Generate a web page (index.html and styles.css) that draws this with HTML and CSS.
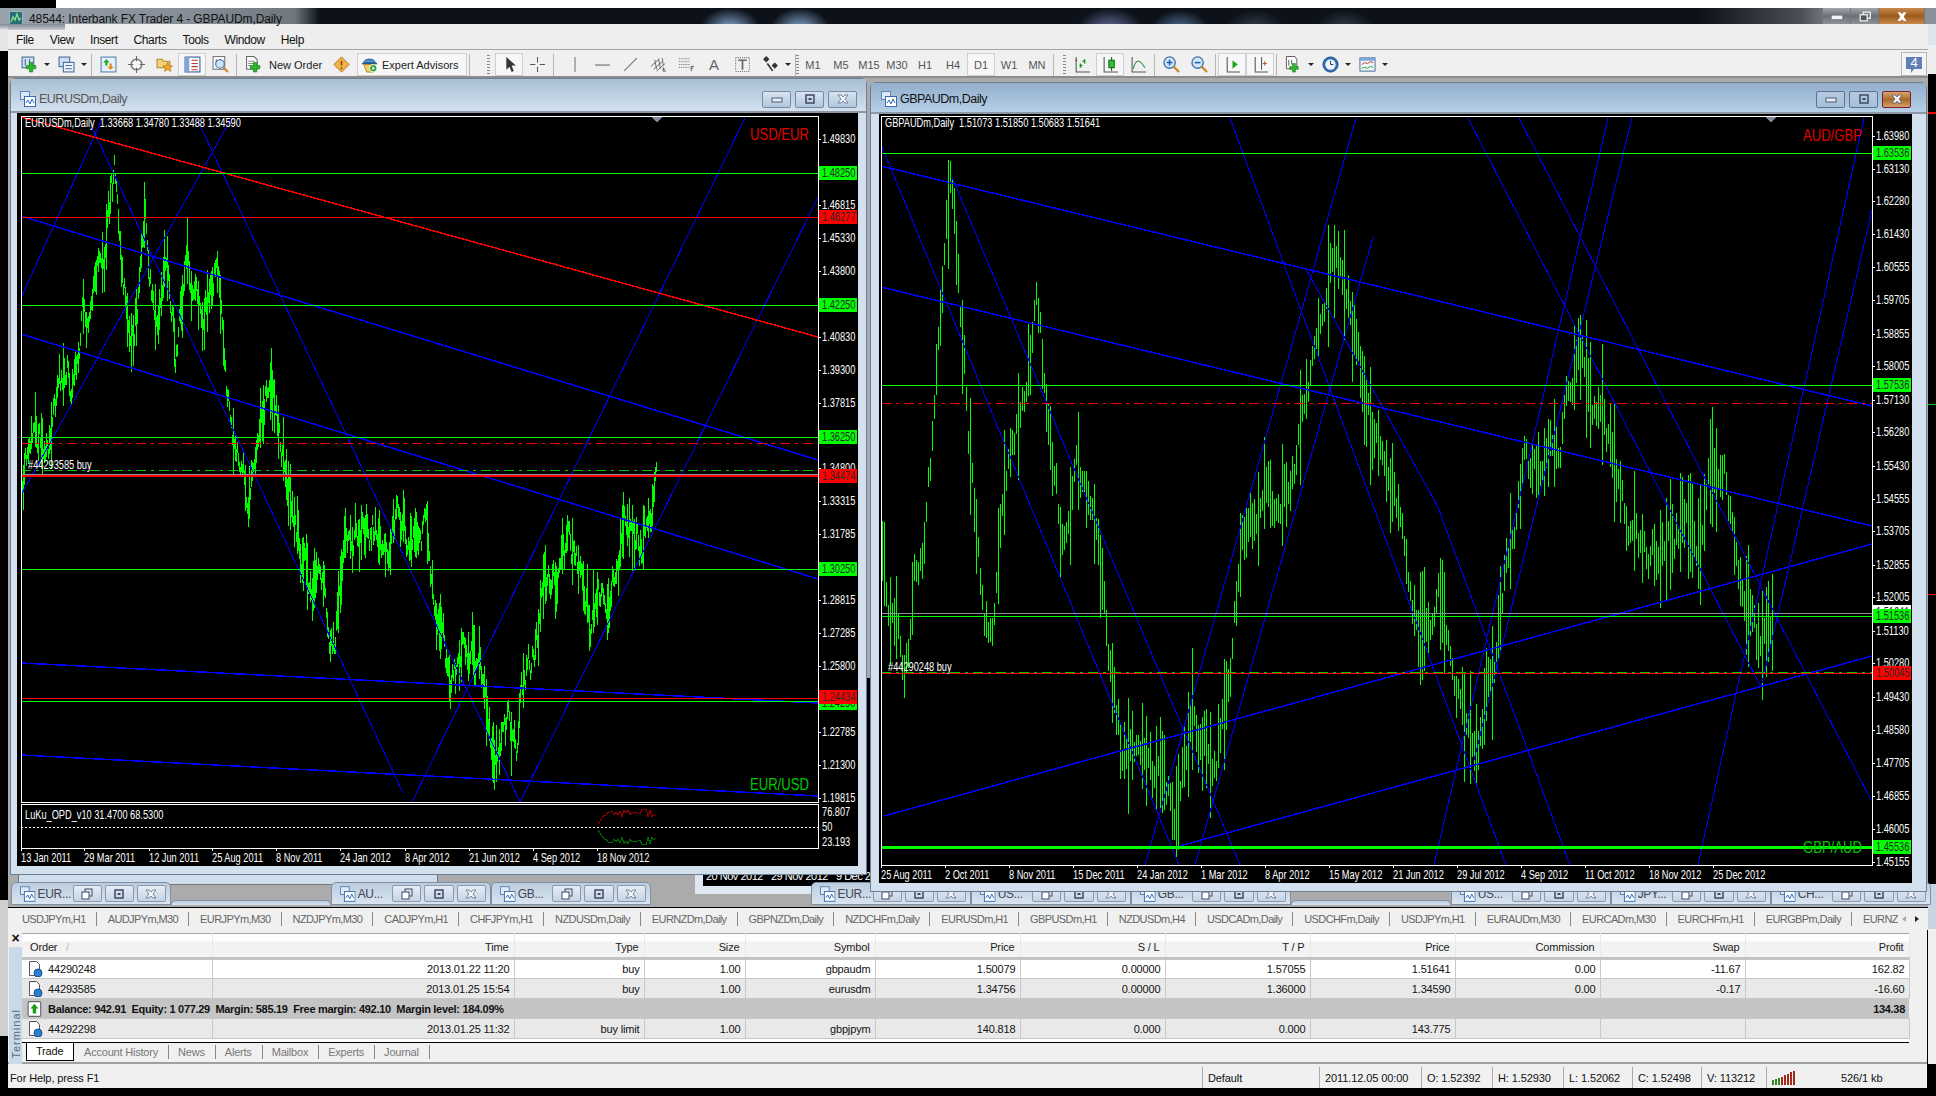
FILE: index.html
```html
<!DOCTYPE html>
<html lang="en">
<head>
  <meta charset="UTF-8">
  <title>48544: Interbank FX Trader 4 - GBPAUDm,Daily</title>
  <link rel="stylesheet" href="styles.css">
</head>
<body>
  <svg class="defs" width="0" height="0">
    <symbol id="i-win" viewBox="0 0 16 16">
      <rect x="0.5" y="0.5" width="9" height="8" fill="#dfe9f5" stroke="#5b84b8"/>
      <rect x="4.5" y="5.5" width="11" height="10" fill="#fff" stroke="#3a6db0"/>
      <path d="M6 12l2-3 2 4 2-5 2 4" fill="none" stroke="#2d6ac0"/>
    </symbol>
    <symbol id="i-doc" viewBox="0 0 16 16">
      <path d="M2.5.5h7l3 3v11h-10z" fill="#fff" stroke="#555"/>
      <circle cx="11" cy="12" r="4" fill="#2f7fd0" stroke="#14508f"/>
    </symbol>
    <symbol id="b-min" viewBox="0 0 16 10"><rect x="3" y="4" width="10" height="4" fill="#e8eef6" stroke="#4a5a78"/></symbol>
    <symbol id="b-max" viewBox="0 0 16 10"><rect x="4" y="1" width="8" height="8" fill="none" stroke="#3c4a66" stroke-width="1.5"/><rect x="6.5" y="4" width="3" height="2" fill="#3c4a66"/></symbol>
    <symbol id="b-res" viewBox="0 0 16 12"><rect x="6" y="1" width="7" height="7" fill="#dce6f2" stroke="#3c4a66"/><rect x="3" y="4" width="7" height="7" fill="#fff" stroke="#3c4a66"/></symbol>
    <symbol id="b-close" viewBox="0 0 16 10"><path d="M3 1h3l2 2 2-2h3l-3 4 3 4h-3l-2-2-2 2H3l3-4z" fill="#f4f6fa" stroke="#4a5a78" stroke-width="0.7"/></symbol>
  </svg>

  <div class="left-strip"></div>
  <div class="right-strip"></div>
  <div class="top-strip"></div>
  <div class="titlebar">
    <svg class="app-icon" viewBox="0 0 14 14"><rect x="0.5" y="0.5" width="13" height="13" fill="#2b6d77" stroke="#8fb7c0"/><path d="M2 11l2-5 2 3 2-6 2 6 2-2" fill="none" stroke="#7fe08a" stroke-width="1.4"/></svg>
    <span class="app-title">48544: Interbank FX Trader 4 - GBPAUDm,Daily</span>
    <div class="caption-btns">
      <span class="cap"><svg viewBox="0 0 16 10"><rect x="2" y="4" width="12" height="4" fill="#f4f4f4"/></svg></span>
      <span class="cap"><svg viewBox="0 0 16 12"><rect x="6" y="1" width="8" height="7" fill="none" stroke="#f4f4f4" stroke-width="1.4"/><rect x="2.5" y="4" width="8" height="7" fill="#555" stroke="#f4f4f4" stroke-width="1.4"/></svg></span>
      <span class="cap cap-close"><svg viewBox="0 0 16 10"><path d="M3 0h3l2 2 2-2h3l-3 5 3 5h-3l-2-2-2 2H3l3-5z" fill="#fff"/></svg></span>
    </div>
  </div>
  <div class="title-tail"></div>

  <div class="app">
    <nav class="menubar">
      <span>File</span><span>View</span><span>Insert</span><span>Charts</span><span>Tools</span><span>Window</span><span>Help</span>
    </nav>

    <div class="toolbar">
      <span class="tool first"><svg viewBox="0 0 16 16"><rect x="1" y="1" width="11" height="10" fill="#cfe0f2" stroke="#44699a"/><path d="M4 3v6M8 3v5" stroke="#44699a"/><path d="M8 6h3v3h3v3h-3v3H8v-3H5V9h3z" fill="#2fb52f" stroke="#137a13" stroke-width="0.6"/></svg></span><span class="caret"></span>
      <span class="tool"><svg viewBox="0 0 16 16"><rect x="1" y="1" width="10" height="9" fill="#cfe0f2" stroke="#44699a"/><rect x="5" y="6" width="10" height="9" fill="#eef4fb" stroke="#44699a"/><path d="M7 9h6M7 12h6" stroke="#44699a"/></svg></span><span class="caret"></span>
      <i class="sep"></i>
      <span class="tool"><svg viewBox="0 0 16 16"><rect x="1" y="1" width="14" height="14" fill="#e6f0fa" stroke="#5480b4"/><path d="M6 3l3 3H7v3H5V6H3z" fill="#1ea51e"/><path d="M10 13l-3-3h2V7h2v3h2z" fill="#e08a12"/></svg></span>
      <span class="tool"><svg viewBox="0 0 16 16"><circle cx="8" cy="8" r="5" fill="#f6f6f6" stroke="#777" stroke-width="1.4"/><path d="M8 0v5M8 11v5M0 8h5M11 8h5" stroke="#666"/></svg></span>
      <span class="tool"><svg viewBox="0 0 16 16"><path d="M1 3h5l1 2h6v6H1z" fill="#f3d27a" stroke="#b08a2c"/><path d="M11 6l1.4 3 3.2.3-2.4 2.1.8 3.1-3-1.7-3 1.7.8-3.1-2.4-2.1 3.2-.3z" fill="#f2a52a" stroke="#b96f10" stroke-width="0.6"/></svg></span>
      <span class="tool on"><svg viewBox="0 0 16 16"><rect x="1" y="1" width="14" height="14" fill="#fff" stroke="#2d5d9b"/><rect x="1" y="1" width="4" height="14" fill="#7ba6d9"/><path d="M7 4h6M7 7h6M7 10h6M7 13h6" stroke="#c0392b"/></svg></span>
      <span class="tool"><svg viewBox="0 0 16 16"><rect x="1" y="0.5" width="11" height="12" fill="#fff" stroke="#777"/><path d="M4 3v6M8 3v5" stroke="#666"/><circle cx="7.5" cy="7.5" r="4" fill="#cfe4f7" stroke="#3c6fa8"/><path d="M10.5 10.5l4.5 4.5" stroke="#c9892a" stroke-width="2"/></svg></span>
      <i class="sep"></i>
      <span class="tool wide"><svg viewBox="0 0 16 16"><path d="M1.5.5h7l3 3v9h-10z" fill="#fff" stroke="#666"/><path d="M3 5h6M3 7h6M3 9h3" stroke="#888"/><path d="M8 6h3v3h3v3h-3v3H8v-3H5V9h3z" fill="#2fb52f" stroke="#137a13" stroke-width="0.6"/></svg><span>New Order</span></span>
      <span class="tool narrow"><svg viewBox="0 0 18 18"><path d="M9 1l8 8-8 8-8-8z" fill="#f2b24a" stroke="#b66d14"/><path d="M9 5v5M9 12v2" stroke="#7a4708" stroke-width="1.6"/></svg></span>
      <span class="tool ea on"><svg viewBox="0 0 18 18"><path d="M3 7c0-5 12-5 12 0z" fill="#4d8fd0" stroke="#24578f"/><path d="M1 8h16" stroke="#24578f" stroke-width="1.6"/><path d="M3 9l3 8h7l2-8z" fill="#f2cf6a" stroke="#b48a22"/><circle cx="13" cy="13" r="4" fill="#2fa52f" stroke="#fff"/><path d="M12 11l3 2-3 2z" fill="#fff"/></svg><span>Expert Advisors</span></span>
      <i class="sep"></i>
      <i class="grip gap-l"></i>
      <span class="tool on"><svg viewBox="0 0 16 16"><path d="M5 1v12l3-3 2 5 2-1-2-5h4z" fill="#333"/></svg></span>
      <span class="tool"><svg viewBox="0 0 16 16"><path d="M8 1v5M8 10v5M1 8h5M10 8h5" stroke="#555"/></svg></span>
      <i class="sep gap-r"></i>
      <span class="tool"><svg viewBox="0 0 16 16"><path d="M8.5 1v14" stroke="#777"/></svg></span>
      <span class="tool"><svg viewBox="0 0 16 16"><path d="M1 8.5h14" stroke="#666"/></svg></span>
      <span class="tool"><svg viewBox="0 0 16 16"><path d="M2 14L14 2" stroke="#777"/></svg></span>
      <span class="tool"><svg viewBox="0 0 18 16"><path d="M1 10l9-8M4 13l9-8M7 15l9-8M5 3l2 10M9 2l2 10M13 1l1 8" stroke="#666" fill="none"/><path d="M14 11v4h3M14 13h2" stroke="#555" fill="none"/></svg></span>
      <span class="tool"><svg viewBox="0 0 18 16"><path d="M1 2h11M1 5h11M1 8h11M1 11h11" stroke="#666" stroke-dasharray="1 1"/><path d="M14 10v5M14 10h3M14 12h2" stroke="#555" fill="none"/></svg></span>
      <span class="tool glyph">A</span>
      <span class="tool"><svg viewBox="0 0 16 16"><rect x="1.5" y="1.5" width="13" height="13" fill="none" stroke="#777" stroke-dasharray="1 1"/><path d="M4 4h8M8 4v9" stroke="#666" stroke-width="1.6"/></svg></span>
      <span class="tool"><svg viewBox="0 0 16 16"><path d="M4 0l3 3-3 3-3-3zM12 6l3 3-3 3-3-3z" fill="#333"/><path d="M5 7l5 7" stroke="#333" stroke-width="1.6"/></svg></span><span class="caret"></span>
      <i class="sep tight"></i>
      <i class="grip tight"></i>
      <span class="tf">M1</span><span class="tf">M5</span><span class="tf">M15</span><span class="tf">M30</span><span class="tf">H1</span><span class="tf">H4</span><span class="tf on">D1</span><span class="tf">W1</span><span class="tf">MN</span>
      <i class="sep"></i>
      <i class="grip gap-m"></i>
      <span class="tool"><svg viewBox="0 0 16 16"><path d="M2 1v14h13M1 4h2" stroke="#555" fill="none"/><path d="M6 11V7M6 9h2M10 7V3M10 5H8" stroke="#0a9a0a" fill="none" stroke-width="1.3"/></svg></span>
      <span class="tool on"><svg viewBox="0 0 16 16"><path d="M2 1v14h13" stroke="#555" fill="none"/><path d="M9 1v13" stroke="#0a6a0a"/><rect x="6.5" y="4" width="5" height="7" fill="#2fc12f" stroke="#0a6a0a"/></svg></span>
      <span class="tool"><svg viewBox="0 0 16 16"><path d="M2 1v14h13" stroke="#555" fill="none"/><path d="M3 12c3-10 6-9 11-1" stroke="#1f8f3a" fill="none"/></svg></span>
      <i class="sep"></i>
      <span class="tool"><svg viewBox="0 0 18 18"><circle cx="7" cy="7" r="6" fill="#cfe4f7" stroke="#3c6fa8" stroke-width="1.4"/><path d="M4 7h6M7 4v6" stroke="#1d5fae" stroke-width="1.6"/><path d="M11 11l6 6" stroke="#c9892a" stroke-width="2.4"/></svg></span>
      <span class="tool"><svg viewBox="0 0 18 18"><circle cx="7" cy="7" r="6" fill="#cfe4f7" stroke="#3c6fa8" stroke-width="1.4"/><path d="M4 7h6" stroke="#1d5fae" stroke-width="1.6"/><path d="M11 11l6 6" stroke="#c9892a" stroke-width="2.4"/></svg></span>
      <i class="sep"></i>
      <span class="tool on"><svg viewBox="0 0 16 16"><path d="M3 1v14h12" stroke="#555" fill="none"/><path d="M8 4l5 4-5 4z" fill="#1ea51e"/></svg></span>
      <span class="tool on"><svg viewBox="0 0 16 16"><path d="M3 1v14h12M9 1v12" stroke="#555" fill="none"/><path d="M10 7h4M12 5v4" stroke="#c9532a"/></svg></span>
      <i class="sep"></i>
      <span class="tool"><svg viewBox="0 0 18 18"><path d="M1.5.5h9l2 3v10h-11z" fill="#fff" stroke="#555"/><path d="M4 4v6M7 4v5" stroke="#555"/><path d="M8 8h3v3h3v3h-3v3H8v-3H5v-3h3z" fill="#2fb52f" stroke="#137a13" stroke-width="0.6"/></svg></span><span class="caret"></span>
      <span class="tool"><svg viewBox="0 0 18 18"><circle cx="9" cy="9" r="8" fill="#2f6fb5" stroke="#1a4a85"/><circle cx="9" cy="9" r="5.5" fill="#eef4fb"/><path d="M9 5v4h3" stroke="#333" fill="none"/></svg></span><span class="caret"></span>
      <span class="tool"><svg viewBox="0 0 18 18"><rect x="1" y="2" width="16" height="14" fill="#eef4fb" stroke="#44699a"/><rect x="1" y="2" width="16" height="3" fill="#7ba6d9"/><path d="M3 9l3-2 3 1 3-2 3 1" stroke="#c0392b" fill="none"/><path d="M3 13l3-1 3 1 3-2 3 1" stroke="#1ea51e" fill="none"/></svg></span><span class="caret"></span>
      <span class="notify"><svg viewBox="0 0 18 18"><path d="M1 1h16v12H9l-3 4v-4H1z" fill="#5f7fb5"/></svg><b>4</b></span>
    </div>

    <div class="mdi">
      <div class="behind behind-left"></div>
      <div class="behind behind-right"><span>20 Nov 2012</span><span>29 Nov 2012</span><span>9 Dec 2</span></div>

      <div class="min-row">
        <div class="min-tab"><svg class="tab-ico"><use href="#i-win"/></svg><span>EUR...</span><u><svg><use href="#b-res"/></svg></u><u><svg><use href="#b-max"/></svg></u><u><svg><use href="#b-close"/></svg></u></div>
        <div class="min-tab low"></div>
        <div class="min-tab"><svg class="tab-ico"><use href="#i-win"/></svg><span>AU...</span><u><svg><use href="#b-res"/></svg></u><u><svg><use href="#b-max"/></svg></u><u><svg><use href="#b-close"/></svg></u></div>
        <div class="min-tab"><svg class="tab-ico"><use href="#i-win"/></svg><span>GB...</span><u><svg><use href="#b-res"/></svg></u><u><svg><use href="#b-max"/></svg></u><u><svg><use href="#b-close"/></svg></u></div>
        <div class="min-tab empty"></div>
        <div class="min-tab"><svg class="tab-ico"><use href="#i-win"/></svg><span>EUR...</span><u><svg><use href="#b-res"/></svg></u><u><svg><use href="#b-max"/></svg></u><u><svg><use href="#b-close"/></svg></u></div>
        <div class="min-tab"><svg class="tab-ico"><use href="#i-win"/></svg><span>US...</span><u><svg><use href="#b-res"/></svg></u><u><svg><use href="#b-max"/></svg></u><u><svg><use href="#b-close"/></svg></u></div>
        <div class="min-tab"><svg class="tab-ico"><use href="#i-win"/></svg><span>GB...</span><u><svg><use href="#b-res"/></svg></u><u><svg><use href="#b-max"/></svg></u><u><svg><use href="#b-close"/></svg></u></div>
        <div class="min-tab low"></div>
        <div class="min-tab"><svg class="tab-ico"><use href="#i-win"/></svg><span>US...</span><u><svg><use href="#b-res"/></svg></u><u><svg><use href="#b-max"/></svg></u><u><svg><use href="#b-close"/></svg></u></div>
        <div class="min-tab"><svg class="tab-ico"><use href="#i-win"/></svg><span>JPY...</span><u><svg><use href="#b-res"/></svg></u><u><svg><use href="#b-max"/></svg></u><u><svg><use href="#b-close"/></svg></u></div>
        <div class="min-tab"><svg class="tab-ico"><use href="#i-win"/></svg><span>CH...</span><u><svg><use href="#b-res"/></svg></u><u><svg><use href="#b-max"/></svg></u><u><svg><use href="#b-close"/></svg></u></div>
      </div>

      <section class="chart-window win-eur">
        <header class="win-title">
          <svg class="title-ico"><use href="#i-win"/></svg><span>EURUSDm,Daily</span>
          <div class="win-btns"><b><svg><use href="#b-min"/></svg></b><b><svg><use href="#b-max"/></svg></b><b><svg><use href="#b-close"/></svg></b></div>
        </header>
        <div class="chart" id="chart-eur"></div>
      </section>

      <section class="chart-window win-gbp">
        <header class="win-title">
          <svg class="title-ico"><use href="#i-win"/></svg><span>GBPAUDm,Daily</span>
          <div class="win-btns"><b><svg><use href="#b-min"/></svg></b><b><svg><use href="#b-max"/></svg></b><b class="close-hot"><svg><use href="#b-close"/></svg></b></div>
        </header>
        <div class="chart" id="chart-gbp"></div>
      </section>
    </div>

    <div class="symbol-tabs">
      <span>USDJPYm,H1</span><span>AUDJPYm,M30</span><span>EURJPYm,M30</span><span>NZDJPYm,M30</span><span>CADJPYm,H1</span><span>CHFJPYm,H1</span><span>NZDUSDm,Daily</span><span>EURNZDm,Daily</span><span>GBPNZDm,Daily</span><span>NZDCHFm,Daily</span><span>EURUSDm,H1</span><span>GBPUSDm,H1</span><span>NZDUSDm,H4</span><span>USDCADm,Daily</span><span>USDCHFm,Daily</span><span>USDJPYm,H1</span><span>EURAUDm,M30</span><span>EURCADm,M30</span><span>EURCHFm,H1</span><span>EURGBPm,Daily</span><span class="clipped">EURNZ</span>
      <div class="tab-arrows"><i class="arrow-l"></i><i class="arrow-r"></i></div>
    </div>

    <div class="terminal">
      <aside class="term-side">
        <span class="term-x">×</span>
        <div class="term-band"><span>Terminal</span></div>
      </aside>
      <div class="term-main">
        <div class="table-wrap">
          <table class="orders">
            <colgroup><col class="c-order"><col class="c-time"><col class="c-type"><col class="c-size"><col class="c-sym"><col class="c-n"><col class="c-n"><col class="c-n"><col class="c-n"><col class="c-n"><col class="c-n"><col class="c-profit"></colgroup>
            <thead>
              <tr><th class="left">Order &nbsp;&nbsp;<em>/</em></th><th>Time</th><th>Type</th><th>Size</th><th>Symbol</th><th>Price</th><th>S / L</th><th>T / P</th><th>Price</th><th>Commission</th><th>Swap</th><th>Profit</th></tr>
            </thead>
            <tbody>
              <tr class="row-white"><td class="left"><svg class="row-ico"><use href="#i-doc"/></svg>44290248</td><td>2013.01.22 11:20</td><td>buy</td><td>1.00</td><td>gbpaudm</td><td>1.50079</td><td>0.00000</td><td>1.57055</td><td>1.51641</td><td>0.00</td><td>-11.67</td><td>162.82</td></tr>
              <tr class="row-grey"><td class="left"><svg class="row-ico"><use href="#i-doc"/></svg>44293585</td><td>2013.01.25 15:54</td><td>buy</td><td>1.00</td><td>eurusdm</td><td>1.34756</td><td>0.00000</td><td>1.36000</td><td>1.34590</td><td>0.00</td><td>-0.17</td><td>-16.60</td></tr>
              <tr class="row-total"><td class="left" colspan="11"><svg class="row-ico" viewBox="0 0 14 14"><rect x="1" y="0.5" width="11" height="13" rx="1" fill="#fff" stroke="#666"/><path d="M6.5 2.5l3.5 4H8v4.500H5V6.500H3z" fill="#17a017"/></svg>Balance: 942.91 &nbsp;Equity: 1 077.29 &nbsp;Margin: 585.19 &nbsp;Free margin: 492.10 &nbsp;Margin level: 184.09%</td><td>134.38</td></tr>
              <tr class="row-grey"><td class="left"><svg class="row-ico"><use href="#i-doc"/></svg>44292298</td><td>2013.01.25 11:32</td><td>buy limit</td><td>1.00</td><td>gbpjpym</td><td>140.818</td><td>0.000</td><td>0.000</td><td>143.775</td><td></td><td></td><td></td></tr>
            </tbody>
          </table>
        </div>
        <div class="term-tabs">
          <span class="on">Trade</span><span>Account History</span><span>News</span><span>Alerts</span><span>Mailbox</span><span>Experts</span><span>Journal</span>
        </div>
      </div>
    </div>

    <footer class="statusbar">
      <span class="st-help">For Help, press F1</span>
      <span class="st st-default">Default</span>
      <span class="st st-date">2011.12.05 00:00</span>
      <span class="st st-o">O: 1.52392</span>
      <span class="st st-o">H: 1.52930</span>
      <span class="st st-l">L: 1.52062</span>
      <span class="st st-l">C: 1.52498</span>
      <span class="st st-v">V: 113212</span>
      <span class="st st-conn">
        <svg viewBox="0 0 24 15" width="24" height="15"><path d="M1 15V10M4 15V9M7 15V8" stroke="#2e8b22" stroke-width="2"/><path d="M10 15V7M13 15V5M16 15V4M19 15V2M22 15V1" stroke="#a5281c" stroke-width="2"/></svg>
      </span>
      <span class="st-kb">526/1 kb</span>
    </footer>
  </div>

  <script src="app.js"></script>
</body>
</html>
```
FILE: styles.css
```css
* { box-sizing: border-box; }
html, body { margin: 0; padding: 0; }
body {
  position: relative;
  width: 1936px;
  height: 1096px;
  overflow: hidden;
  background: #000;
  color: #111;
  font-family: "Liberation Sans", sans-serif;
  font-size: 11px;
}
svg { display: block; }
.defs { position: absolute; }

/* window chrome around the terminal */
.top-strip {
  height: 8px;
  background: linear-gradient(90deg, #000 56px, #fff 56px);
}
.titlebar {
  display: flex;
  align-items: center;
  height: 16px;
  padding-left: 9px;
  background:
    radial-gradient(ellipse 30px 22px at 730px 22px, #8fb4e0, rgba(143,180,224,0) 100%),
    radial-gradient(ellipse 30px 22px at 800px 22px, #8fb4e0, rgba(143,180,224,0) 100%),
    radial-gradient(ellipse 34px 24px at 1110px 24px, #6f78a8, rgba(111,120,168,0) 100%),
    radial-gradient(ellipse 30px 22px at 1180px 24px, #5d7fa8, rgba(93,127,168,0) 100%),
    radial-gradient(ellipse 30px 22px at 1255px 24px, #3d4654, rgba(61,70,84,0) 100%),
    radial-gradient(ellipse 30px 22px at 1345px 24px, #3d4654, rgba(61,70,84,0) 100%),
    linear-gradient(90deg, #9aa3ac 0, #838b94 200px, #6f767e 295px, #0d121a 320px, #0d121a 1700px, #4a4f55 1800px, #8a9098 1840px);
}
.app-icon { width: 14px; height: 14px; margin-top: 4px; }
.app-title { margin-left: 6px; margin-top: 6px; font-size: 12px; letter-spacing: -0.1px; color: #111; white-space: nowrap; }
.caption-btns { display: flex; margin-left: auto; margin-right: 11px; height: 16px; }
.cap {
  display: flex;
  align-items: center;
  justify-content: center;
  width: 28px;
  border-right: 1px solid #777;
  background: linear-gradient(#a3a7ad, #6c7076 50%, #8d9298);
}
.cap svg { width: 14px; height: 11px; }
.cap-close { width: 46px; background: linear-gradient(#c98a4e, #9c5a1e 50%, #c98a4e); }
.title-tail {
  position: absolute;
  left: 8px;
  top: 24px;
  width: 57px;
  height: 6px;
  background: linear-gradient(#7f8790, #c8ccd2);
}
.left-strip {
  position: absolute;
  left: 0;
  top: 24px;
  width: 8px;
  height: 1072px;
  background: linear-gradient(#7f8790 0, #e4e6e8 6px, #e4e6e8 27px, #000 27px, #000 876px, #cfcfcf 876px, #cfcfcf 1012px, #000 1012px);
}
.right-strip {
  position: absolute;
  right: 0;
  top: 24px;
  width: 8px;
  height: 1072px;
  background: linear-gradient(#dfe5ec 0, #dfe5ec 21px, #eee 21px, #eee 50px, #000 50px, #000 88px, #f00 88px, #f00 90px, #000 90px, #000 380px, #0c0 380px, #0c0 381px, #000 381px, #000 570px, #f00 570px, #f00 571px, #000 571px, #000 860px, #c8d4e2 860px, #c8d4e2 905px, #f0f0f0 905px, #f0f0f0 1040px, #000 1040px);
}

.app { margin-left: 8px; width: 1920px; }
.menubar {
  display: flex;
  gap: 16px;
  align-items: center;
  height: 26px;
  padding: 6px 0 0 8px;
  background: #eee;
  border-bottom: 1px solid #a5a5a5;
  font-size: 12px;
  letter-spacing: -0.4px;
}

/* toolbar */
.toolbar {
  display: flex;
  align-items: center;
  height: 28px;
  padding: 3px 0 0 7px;
  background: #f0f0f0;
  border-bottom: 2px solid #8c8c8c;
  color: #222;
}
.tool {
  display: flex;
  align-items: center;
  justify-content: center;
  flex: none;
  width: 28px;
  height: 23px;
  border: 1px solid transparent;
}
.tool svg { width: 17px; height: 17px; }
.tool.first { width: 28px; }
.tool.on, .tf.on { background: #f7f7f7; border: 1px solid #cfcfcf; }
.tool.wide { width: 90px; gap: 7px; justify-content: flex-start; padding-left: 5px; }
.tool.narrow { width: 24px; }
.tool.ea { width: 110px; gap: 4px; justify-content: flex-start; padding-left: 3px; margin-left: 4px; }
.tool.glyph { font-size: 15px; color: #666; }
.caret {
  flex: none;
  width: 0;
  height: 0;
  margin: 0 2px 0 1px;
  border: 3px solid transparent;
  border-top: 3px solid #222;
  border-bottom: 0;
}
.sep { flex: none; width: 1px; height: 22px; margin: 0 2px; background: #b5b5b5; }
.sep.gap-r { margin-right: 6px; }
.sep.tight { margin-right: 0; }
.grip {
  flex: none;
  width: 3px;
  height: 20px;
  margin: 0 2px 0 2px;
  background: repeating-linear-gradient(#888 0, #888 1px, transparent 1px, transparent 3px);
}
.grip.gap-l { margin-left: 15px; margin-right: 5px; }
.grip.gap-m { margin-left: 7px; }
.grip.tight { margin: 0; }
.tf {
  display: flex;
  align-items: center;
  justify-content: center;
  flex: none;
  width: 28px;
  height: 23px;
  border: 1px solid transparent;
  color: #555;
}
.notify {
  position: absolute;
  left: 1901px;
  top: 52px;
  width: 26px;
  height: 24px;
  padding: 3px;
  background: #f4f4f4;
  border: 1px solid #b5b5b5;
}
.notify svg { width: 18px; height: 18px; }
.notify b {
  position: absolute;
  left: 0;
  top: 2px;
  width: 24px;
  text-align: center;
  color: #fff;
  font-weight: normal;
  font-size: 13px;
}

/* MDI desktop: the windows sit on a free canvas */
.mdi {
  position: relative;
  height: 830px;
  background: #ababab;
  border-bottom: 1px solid #000;
}
.behind { position: absolute; background: #cfdeed; border: 1px solid #777; }
.behind-left { left: 10px; top: 780px; width: 420px; height: 27px; }
.behind-right {
  display: flex;
  align-items: flex-start;
  left: 687px;
  top: 600px;
  width: 190px;
  height: 216px;
  padding: 192px 0 0 3px;
  background: #000;
  border: 8px solid #dde8f2;
  border-top: 0;
  border-right: 0;
  color: #fff;
  font-size: 11px;
  letter-spacing: -0.5px;
  white-space: nowrap;
}
.behind-right span { flex: none; width: 65px; }
.min-row {
  position: absolute;
  left: 3px;
  top: 804px;
  display: flex;
  height: 23px;
}
.min-tab {
  display: flex;
  align-items: center;
  flex: none;
  width: 160px;
  height: 23px;
  padding: 0 4px 0 8px;
  background: linear-gradient(#bccdde, #d9e5f0);
  border: 1px solid #7f8fa5;
  border-radius: 5px 5px 0 0;
  color: #445;
  font-size: 12px;
  letter-spacing: -0.3px;
}
.min-tab.low { align-self: flex-end; height: 5px; border-bottom: 0; }
.min-tab.empty { visibility: hidden; }
.tab-ico { width: 16px; height: 16px; margin-right: 2px; }
.min-tab span { width: 32px; }
.min-tab u {
  display: flex;
  align-items: center;
  justify-content: center;
  width: 30px;
  height: 17px;
  margin-left: 3px;
  border: 1px solid #8a99ae;
  border-radius: 2px;
  background: linear-gradient(#e6edf5, #c4d4e4);
}
.min-tab u svg { width: 16px; height: 12px; }

.chart-window {
  position: absolute;
  display: flex;
  flex-direction: column;
  background: #d3e1ef;
  border: 1px solid #6d7f95;
  border-radius: 6px 6px 0 0;
}
.win-eur { left: 2px; top: 0; width: 857px; height: 797px; padding: 0 8px 8px 6px; }
.win-gbp { left: 862px; top: 4px; width: 1057px; height: 810px; padding: 0 14px 8px 8px; }
.win-title {
  display: flex;
  align-items: center;
  flex: none;
  margin: 0 -8px 0 -6px;
  padding: 8px 9px 0 9px;
  height: 34px;
  font-size: 12.500px;
  letter-spacing: -0.5px;
  color: #555;
  background: linear-gradient(#a9bfd4, #d3e1ef);
  border-bottom: 2px solid #8e98a4;
}
.win-gbp .win-title {
  margin: 0 -14px 0 -8px;
  padding: 3px 15px 0 10px;
  height: 31px;
  color: #111;
  background: linear-gradient(#92aecb, #b7d0e8);
}
.title-ico { width: 16px; height: 16px; margin-right: 3px; }
.win-btns { display: flex; gap: 4px; margin-left: auto; }
.win-btns b {
  display: flex;
  align-items: center;
  justify-content: center;
  width: 29px;
  height: 17px;
  border: 1px solid #7789a5;
  border-radius: 2px;
  background: linear-gradient(#d8e3ef, #b2c7dc);
}
.win-btns svg { width: 16px; height: 10px; }
.win-gbp .win-btns b { border-color: #5d7099; background: linear-gradient(#b6c9de, #a7c0da); }
.win-gbp .win-btns b.close-hot { border-color: #7a1f33; background: linear-gradient(#d9a66e, #a86a2c 50%, #d6a06a); }
.chart { flex: none; background: #000; }

/* chart drawing */
.chart svg { shape-rendering: crispEdges; }
.chart text { font-family: "Liberation Sans", sans-serif; font-size: 12px; fill: #fff; }
.chart text.tag { fill: #2a2a2a; }
.chart text.pair { font-size: 17px; }

/* symbol tabs */
.symbol-tabs {
  position: relative;
  display: flex;
  align-items: center;
  height: 22px;
  padding-left: 3px;
  overflow: hidden;
  background: #f0f0f0;
  color: #666;
  letter-spacing: -0.6px;
  white-space: nowrap;
}
.symbol-tabs span { padding: 0 10px 0 11px; border-right: 1px solid #888; line-height: 14px; }
.symbol-tabs .clipped { border-right: 0; padding-right: 0; }
.tab-arrows {
  position: absolute;
  right: 9px;
  top: 0;
  display: flex;
  align-items: center;
  gap: 9px;
  height: 22px;
  padding-left: 4px;
  background: #f0f0f0;
}
.arrow-l, .arrow-r { width: 0; height: 0; border: 3px solid transparent; }
.arrow-l { border-right: 4px solid #aaa; border-left: 0; }
.arrow-r { border-left: 4px solid #222; border-right: 0; }

/* terminal */
.terminal {
  display: flex;
  width: 1919px;
  height: 134px;
  background: #f0f0f0;
  border-bottom: 2px solid #a0a0a0;
}
.term-side { position: relative; flex: none; width: 14px; padding-left: 1px; }
.term-x {
  display: block;
  height: 17px;
  text-align: center;
  font-size: 14px;
  font-weight: bold;
  line-height: 16px;
}
.term-band {
  display: flex;
  justify-content: flex-start;
  height: 117px;
  background: #c9d9e9;
  align-items: center;
  flex-direction: column-reverse;
  padding-bottom: 5px;
}
.term-band span {
  writing-mode: vertical-rl;
  transform: rotate(180deg);
  font-size: 11px;
  letter-spacing: 1px;
  color: #5a6a7a;
}
.term-main { flex: 1; min-width: 0; padding-top: 3px; }
.table-wrap {
  height: 110px;
  width: 1887px;
  background: #fdfdfd;
  border-bottom: 1px solid #000;
}
.orders { table-layout: fixed; border-collapse: collapse; width: 1887px; letter-spacing: -0.15px; }
.c-order { width: 190px; }
.c-time { width: 302px; }
.c-type { width: 130px; }
.c-size { width: 101px; }
.c-sym { width: 130px; }
.c-n { width: 145px; }
.c-profit { width: 164px; }
.orders th {
  height: 25px;
  padding: 2px 5px 0;
  text-align: right;
  font-weight: normal;
  color: #222;
  background: linear-gradient(#fff 30%, #f1f1f1 30%, #f4f4f4);
  border-top: 1px solid #a8a8a8;
  border-right: 1px solid #e8e8e8;
  border-bottom: 3px solid #c4c4c4;
}
.orders th.left { padding-left: 8px; text-align: left; }
.orders th em { color: #bbb; font-style: normal; }
.orders td {
  height: 20px;
  padding: 0 4px;
  text-align: right;
  white-space: nowrap;
  border-right: 1px solid #c8c8c8;
  border-bottom: 1px solid #c8c8c8;
}
.orders td.left { text-align: left; padding-left: 5px; }
.row-white td { background: #fff; }
.row-grey td { background: #e9e9e9; }
.orders .row-total td { background: #c4c4c4; font-weight: bold; letter-spacing: -0.3px; border-right: 0; }
.row-ico { display: inline-block; vertical-align: -4px; width: 16px; height: 16px; margin-right: 5px; }
.term-tabs {
  display: flex;
  align-items: center;
  height: 18px;
  padding-left: 4px;
  color: #777;
  letter-spacing: -0.2px;
}
.term-tabs span { padding: 0 10px 0 9px; border-right: 1px solid #888; line-height: 14px; }
.term-tabs span.on {
  align-self: stretch;
  width: 48px;
  margin-right: 1px;
  padding: 1px 0 0 9px;
  color: #111;
  background: #fff;
  border: 1px solid #000;
  border-top: 0;
  line-height: 15px;
}

/* status bar */
.statusbar {
  display: flex;
  align-items: stretch;
  height: 24px;
  width: 1919px;
  padding: 3px 0 0 2px;
  background: #f0f0f0;
  letter-spacing: -0.1px;
  line-height: 22px;
}
.st-help { width: 1192px; }
.st { padding-left: 5px; border-left: 1px solid #aaa; white-space: nowrap; }
.st-default { width: 117px; }
.st-date { width: 102px; }
.st-o { width: 71px; }
.st-l { width: 69px; }
.st-v { width: 65px; }
.st-conn { width: 75px; padding-top: 3px; }
.st-kb { white-space: nowrap; }
```
FILE: app.js
```js
// draws the two charts from rough price paths, all coordinates are page pixels

function rng(seed) {
  let s = seed;
  return () => {
    s = (s * 1664525 + 1013904223) % 4294967296;
    return s / 4294967296;
  };
}

function interp(points, x) {
  for (let i = 1; i < points.length; i++) {
    if (x <= points[i][0]) {
      const [x0, y0] = points[i - 1];
      const [x1, y1] = points[i];
      return y0 + (y1 - y0) * (x - x0) / (x1 - x0);
    }
  }
  return points[points.length - 1][1];
}

function barsPath(c) {
  const rand = rng(c.seed);
  let d = '', drift = 0;
  const end = c.path[c.path.length - 1][0];
  for (let x = c.path[0][0]; x <= end; x += c.step) {
    drift = drift * 0.8 + (rand() - 0.5) * c.wobble;
    const mid = interp(c.path, x) + drift;
    const r = rand();
    const half = c.minHalf + r * r * r * (c.maxHalf - c.minHalf);
    d += `M${Math.round(x)} ${Math.round(mid - half)}V${Math.round(mid + half)}`;
  }
  return `<path d="${d}" stroke="#00ff00" fill="none"/>`;
}

function line(l, color, width) {
  return `<line x1="${l[0]}" y1="${l[1]}" x2="${l[2]}" y2="${l[3]}" stroke="${color}" stroke-width="${width}"/>`;
}

function poly(pts, color) {
  return `<polyline points="${pts.join(' ')}" fill="none" stroke="${color}"/>`;
}

// the terminal's font is tall and narrow, so the labels are squeezed sideways
function text(x, y, str, cls, fill) {
  const attr = (cls ? ` class="${cls}"` : '') + (fill ? ` style="fill:${fill}"` : '');
  return `<text transform="translate(${x} ${y}) scale(0.77 1)"${attr}>${str}</text>`;
}

function renderChart(id, c) {
  const [px0, py0, px1, py1] = c.plot;
  let s = '';
  s += `<clipPath id="${id}-clip"><rect x="${px0}" y="${py0}" width="${px1 - px0}" height="${py1 - py0}"/></clipPath>`;
  s += `<g clip-path="url(#${id}-clip)">`;
  s += barsPath(c);
  c.thin.forEach(t => { s += typeof t[0] === 'string' ? poly(t, '#0000ff') : line(t, '#0000ff', 1); });
  c.thick.forEach(t => { s += line(t, '#0000ff', 1.5); });
  if (c.redTrend) s += line(c.redTrend, '#ff0000', 1.5);
  c.hlines.forEach(h => {
    const dash = h.dash ? ' stroke-dasharray="10 5 3 5"' : '';
    s += `<line x1="${px0}" y1="${h.y}" x2="${px1}" y2="${h.y}" stroke="${h.color}" stroke-width="${h.w || 1}"${dash}/>`;
  });
  s += '</g>';
  s += `<rect x="${px0}" y="${py0}" width="${px1 - px0}" height="${py1 - py0}" fill="none" stroke="#fff"/>`;
  s += `<path d="M${c.triangle - 6} ${py0 + 1}h12l-6 5z" fill="#7f8a99"/>`;

  c.prices.forEach(p => {
    s += `<path d="M${px1} ${p[1]}h3" stroke="#fff"/>`;
    s += text(px1 + 4, p[1] + 4, p[0]);
  });
  c.tags.forEach(t => {
    s += `<rect x="${px1 + 1}" y="${t[1] - 7}" width="${c.tagWidth}" height="14" fill="${t[2]}"/>`;
    s += text(px1 + 4, t[1] + 4, t[0], 'tag');
  });
  c.dates.forEach(d => {
    s += `<path d="M${d[0]} ${c.axisY}v3" stroke="#fff"/>`;
    s += text(d[0], c.axisY + 14, d[1]);
  });

  s += text(px0 + 4, py0 + 11, c.head);
  s += text(px0 + 7, c.order[0], c.order[1]);
  s += text(c.pairTop[0], c.pairTop[1], c.pairTop[2], 'pair', '#e00000');
  s += text(c.pairBottom[0], c.pairBottom[1], c.pairBottom[2], 'pair', '#00c800');
  if (c.indicator) s += renderIndicator(c);

  const [bx, by, bw, bh] = c.box;
  document.getElementById(id).innerHTML =
    `<svg width="${bw}" height="${bh}" viewBox="${bx} ${by} ${bw} ${bh}">${s}</svg>`;
}

function renderIndicator(c) {
  const [x0, y0, x1, y1] = c.indicator;
  const rand = rng(77);
  const mid = 827;
  let up = [], down = [];
  for (let x = 598; x <= 656; x += 2) {
    const v = x < 604 ? (x - 598) * 1.6 : 7 + rand() * 9;
    up.push(`${x},${Math.round(mid - 3 - v)}`);
    down.push(`${x},${Math.round(mid + 3 + v)}`);
  }
  let s = `<rect x="${x0}" y="${y0}" width="${x1 - x0}" height="${y1 - y0}" fill="none" stroke="#fff"/>`;
  s += `<line x1="${x0}" y1="${mid}" x2="${x1}" y2="${mid}" stroke="#fff" stroke-dasharray="2 2"/>`;
  s += poly(up, '#8b0000') + poly(down, '#006400');
  s += text(x0 + 4, 819, 'LuKu_OPD_v10 31.4700 68.5300');
  s += text(x1 + 4, 816, '76.807') + text(x1 + 4, 831, '50') + text(x1 + 4, 846, '23.193');
  return s;
}

renderChart('chart-eur', {
  box: [17, 113, 841, 753],
  plot: [21, 116, 818, 802],
  axisY: 848,
  indicator: [21, 804, 818, 848],
  triangle: 657,
  tagWidth: 38,
  seed: 11,
  step: 1,
  wobble: 30,
  minHalf: 5,
  maxHalf: 34,
  head: 'EURUSDm,Daily &#160;1.33668 1.34780 1.33488 1.34590',
  order: [469, '#44293585 buy'],
  pairTop: [750, 140, 'USD/EUR'],
  pairBottom: [750, 790, 'EUR/USD'],
  path: [[21,503],[26,470],[35,427],[43,443],[51,450],[59,403],[68,360],[73,377],[81,317],[90,310],[98,253],[106,227],[114,185],[120,260],[126,310],[133,337],[144,217],[155,297],[168,243],[175,343],[186,277],[199,307],[216,263],[224,327],[229,410],[238,470],[246,503],[254,443],[265,393],[273,403],[282,443],[292,510],[309,567],[323,583],[334,640],[342,543],[355,530],[372,517],[386,550],[397,510],[408,557],[424,530],[432,580],[441,633],[451,690],[465,650],[482,680],[490,730],[498,752],[508,713],[517,727],[526,677],[537,633],[545,560],[556,593],[569,567],[580,587],[591,625],[605,583],[616,567],[624,527],[641,560],[649,513],[656,490]],
  thin: [
    [21,298,103,117], [92,127,403,793], [196,117,520,802],
    [232,117,21,495], [745,118,412,802], [818,197,520,802]
  ],
  thick: [[21,216,818,460], [21,334,818,579], [21,663,818,703], [21,755,818,796]],
  redTrend: [21,117,818,337],
  hlines: [
    { y: 173, color: '#00ff00' }, { y: 217, color: '#ff0000' }, { y: 305, color: '#00ff00' },
    { y: 437, color: '#00ff00' }, { y: 443, color: '#ff0000', dash: true }, { y: 470, color: '#00cc00', dash: true },
    { y: 474, color: '#8a94a0' }, { y: 476, color: '#ff0000', w: 2 }, { y: 569, color: '#00ff00' },
    { y: 698, color: '#ff0000' }, { y: 701, color: '#00ff00' }
  ],
  prices: [['1.49830',139],['1.46815',205],['1.45330',238],['1.43800',271],['1.40830',337],['1.39300',370],['1.37815',403],['1.34800',468],['1.33315',501],['1.31785',534],['1.28815',600],['1.27285',633],['1.25800',666],['1.22785',732],['1.21300',765],['1.19815',798]],
  tags: [['1.48250',173,'#00ff00'],['1.46277',217,'#ff0000'],['1.42250',305,'#00ff00'],['1.36250',437,'#00ff00'],['1.34474',476,'#ff0000'],['1.30250',569,'#00ff00'],['1.24250',703,'#00ff00'],['1.24434',697,'#ff0000']],
  dates: [[21,'13 Jan 2011'],[84,'29 Mar 2011'],[149,'12 Jun 2011'],[212,'25 Aug 2011'],[276,'8 Nov 2011'],[340,'24 Jan 2012'],[405,'8 Apr 2012'],[469,'21 Jun 2012'],[533,'4 Sep 2012'],[597,'18 Nov 2012']]
});

renderChart('chart-gbp', {
  box: [879, 114, 1033, 769],
  plot: [881, 116, 1872, 865],
  axisY: 865,
  triangle: 1771,
  tagWidth: 38,
  seed: 5,
  step: 2,
  wobble: 34,
  minHalf: 10,
  maxHalf: 62,
  head: 'GBPAUDm,Daily &#160;1.51073 1.51850 1.50683 1.51641',
  order: [671, '#44290248 buy'],
  pairTop: [1803, 141, 'AUD/GBP'],
  pairBottom: [1803, 853, 'GBP/AUD'],
  path: [[882,560],[890,640],[904,660],[915,560],[925,520],[935,420],[943,300],[950,205],[958,300],[965,380],[975,520],[984,620],[991,650],[1003,519],[1019,420],[1037,310],[1047,420],[1062,543],[1078,450],[1093,531],[1105,617],[1120,741],[1136,770],[1161,790],[1176,815],[1191,741],[1216,728],[1228,667],[1241,556],[1266,494],[1278,543],[1296,432],[1315,333],[1331,260],[1346,272],[1364,370],[1383,457],[1401,506],[1420,617],[1438,593],[1451,667],[1469,755],[1482,728],[1500,630],[1512,531],[1525,444],[1537,469],[1558,457],[1578,350],[1593,420],[1611,469],[1642,560],[1661,543],[1679,531],[1698,550],[1710,457],[1725,450],[1735,531],[1747,580],[1763,655],[1772,625]],
  thin: [
    [882,147,1179,865], [952,177,1240,865], [1230,118,1506,865],
    ['1305,267', '1438,507', '1570,865'],
    [1519,118,1871,800], [1468,118,1761,687],
    [1356,118,1145,865], [1373,237,1195,865], [1608,118,1434,865],
    [1632,118,1474,760], [1864,118,1698,865], [1872,210,1761,687]
  ],
  thick: [[881,166,1872,406], [881,287,1872,526], [884,816,1872,544], [1176,847,1872,656]],
  hlines: [
    { y: 153, color: '#00ff00' }, { y: 385, color: '#00ff00' }, { y: 403, color: '#ff0000', dash: true },
    { y: 613, color: '#8a94a0' }, { y: 616, color: '#00ff00' }, { y: 673, color: '#ff0000' },
    { y: 672, color: '#00cc00', dash: true }, { y: 847, color: '#00ff00', w: 3 }
  ],
  prices: [['1.63980',136],['1.63130',169],['1.62280',201],['1.61430',234],['1.60555',267],['1.59705',300],['1.58855',334],['1.58005',366],['1.57130',400],['1.56280',432],['1.55430',466],['1.54555',499],['1.53705',531],['1.52855',565],['1.52005',597],['1.51130',631],['1.50280',663],['1.49430',697],['1.48580',730],['1.47705',763],['1.46855',796],['1.46005',829],['1.45155',862]],
  tags: [['1.63536',153,'#00ff00'],['1.57536',385,'#00ff00'],['1.51641',612,'#ffffff'],['1.51536',616,'#00ff00'],['1.50045',673,'#ff0000'],['1.45536',847,'#00ff00']],
  dates: [[881,'25 Aug 2011'],[945,'2 Oct 2011'],[1009,'8 Nov 2011'],[1073,'15 Dec 2011'],[1137,'24 Jan 2012'],[1201,'1 Mar 2012'],[1265,'8 Apr 2012'],[1329,'15 May 2012'],[1393,'21 Jun 2012'],[1457,'29 Jul 2012'],[1521,'4 Sep 2012'],[1585,'11 Oct 2012'],[1649,'18 Nov 2012'],[1713,'25 Dec 2012']]
});
```
